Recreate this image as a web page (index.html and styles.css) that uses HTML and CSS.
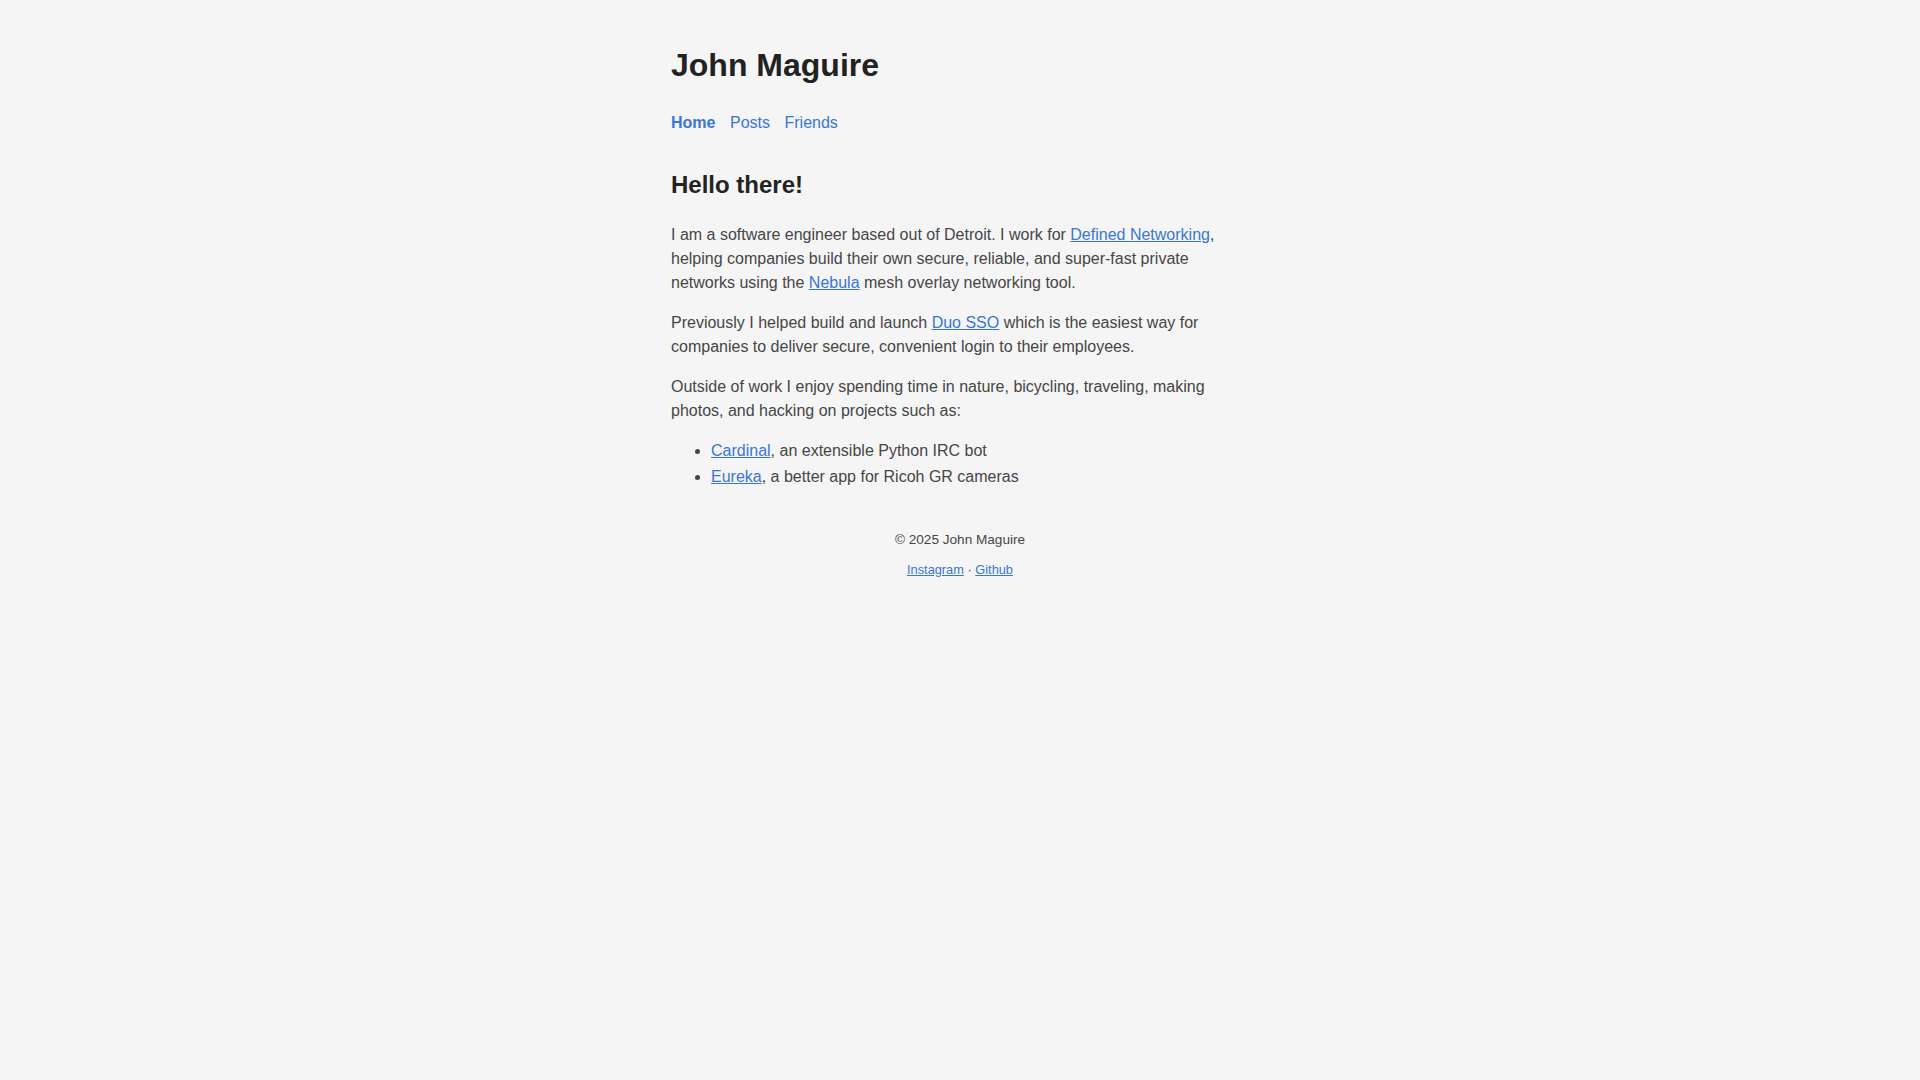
FILE: index.html
```html
<!DOCTYPE html>
<html lang="en">
<head>
<meta charset="utf-8">
<title>John Maguire</title>
<link rel="stylesheet" href="styles.css">
</head>
<body>
<div class="container">
  <header class="site-header">
    <h1 class="site-title">John Maguire</h1>
    <nav class="site-nav">
      <a href="#" class="nav-link active">Home</a>
      <a href="#" class="nav-link">Posts</a>
      <a href="#" class="nav-link">Friends</a>
    </nav>
  </header>
  <main class="content">
    <h2 class="page-title">Hello there!</h2>
    <p>I am a software engineer based out of Detroit. I work for <a href="#">Defined Networking</a>, helping companies build their own secure, reliable, and super-fast private networks using the <a href="#">Nebula</a> mesh overlay networking tool.</p>
    <p>Previously I helped build and launch <a href="#">Duo SSO</a> which is the easiest way for companies to deliver secure, convenient login to their employees.</p>
    <p>Outside of work I enjoy spending time in nature, bicycling, traveling, making photos, and hacking on projects such as:</p>
    <ul class="projects">
      <li><a href="#">Cardinal</a>, an extensible Python IRC bot</li>
      <li><a href="#">Eureka</a>, a better app for Ricoh GR cameras</li>
    </ul>
  </main>
  <footer class="site-footer">
    <p class="copyright">© 2025 John Maguire</p>
    <p class="social"><a href="#">Instagram</a> · <a href="#">Github</a></p>
  </footer>
</div>
</body>
</html>
```
FILE: styles.css
```css
html, body {
  margin: 0;
  padding: 0;
  background: #f5f5f5;
}
body {
  font-family: "Liberation Sans", Arial, sans-serif;
  font-size: 16px;
  line-height: 1.5;
  color: #464646;
}
a {
  color: #3a76d6;
}
.container {
  width: 578px;
  margin: 0 auto;
  padding-top: 46px;
}
.site-title {
  margin: 0 0 27px;
  font-size: 32px;
  line-height: 1.2;
  font-weight: bold;
  color: #222;
}
.site-nav {
  display: flex;
  gap: 14.5px;
  margin-bottom: 36px;
}
.nav-link {
  text-decoration: none;
  color: #3a76d6;
}
.nav-link.active {
  font-weight: bold;
}
.page-title {
  margin: 0 0 23px;
  font-size: 24px;
  line-height: 1.2;
  font-weight: bold;
  color: #222;
}
.content p {
  margin: 0 0 16px;
}
.projects {
  margin: -1px 0 0;
  padding-left: 40px;
}
.projects li {
  line-height: 1.6;
}
.site-footer {
  margin-top: 41px;
  text-align: center;
}
.copyright {
  margin: 0;
  font-size: 13.6px;
  line-height: 1.5;
}
.social {
  margin: 9px 0 0;
  font-size: 12.8px;
  line-height: 1.5;
}
```
